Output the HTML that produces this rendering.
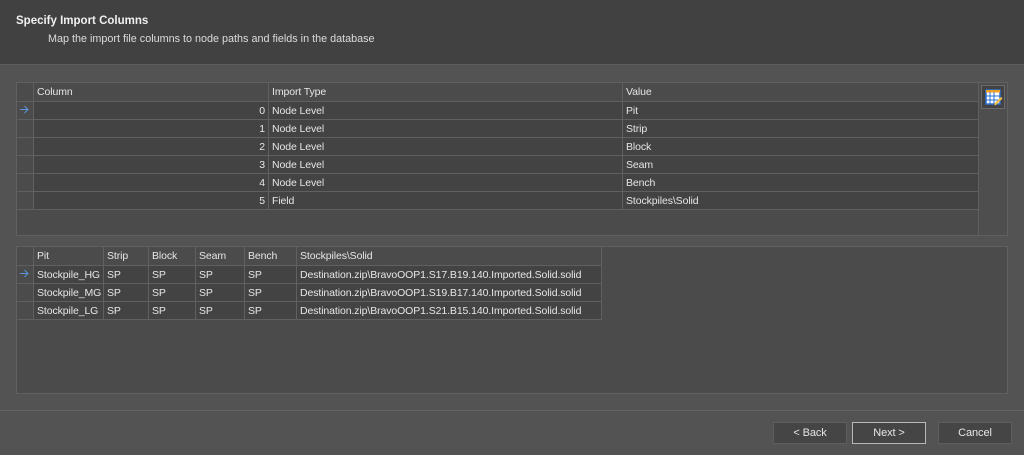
<!DOCTYPE html>
<html><head><style>
*{box-sizing:border-box;margin:0;padding:0}
body{width:1024px;height:455px;background:#535353;font-family:"Liberation Sans",sans-serif;font-size:10.5px;letter-spacing:-0.1px;color:#e6e6e6;position:relative;overflow:hidden}
.hdr{position:absolute;left:0;top:0;width:1024px;height:65px;background:#414141;border-bottom:1px solid #5c5c5c}
.t{position:absolute;left:16px;top:15px;font-weight:bold;font-size:11.5px;color:#f0f0f0;letter-spacing:0}
.s{position:absolute;left:48px;top:33px;font-size:10.8px;color:#dcdcdc;letter-spacing:0}
table{position:absolute;border-collapse:collapse;table-layout:fixed}
td{border:1px solid #606060;height:18px;padding:0 3px;white-space:nowrap;overflow:hidden;background:#434343;line-height:16px}
tr.h td{background:#4b4b4b;height:19px}
td.ind{background:#4b4b4b;padding:0 2px}
.r{text-align:right}
.box{position:absolute;border:1px solid #606060;background:#4b4b4b}
.btn{position:absolute;top:422px;width:74px;height:22px;border:1px solid #5e5e5e;background:#454545;text-align:center;line-height:20px;font-size:11px}
</style></head><body>
<div class="hdr"><div class="t">Specify Import Columns</div><div class="s">Map the import file columns to node paths and fields in the database</div></div>
<div class="box" style="left:16px;top:82px;width:964px;height:154px"></div>
<div class="box" style="left:978px;top:82px;width:30px;height:154px;background:#4e4e4e"></div>
<div style="position:absolute;left:981px;top:85px;width:24px;height:24px;border:1px solid #6a6a6a;background:#434343">
<svg width="22" height="22" viewBox="0 0 22 22"><rect x="4" y="4" width="14" height="14" fill="#fff" stroke="#2a6fd0" stroke-width="1.5"/><rect x="4" y="4" width="14" height="2.5" fill="#f0a020"/><path d="M8 6v12M12 6v12M4 10h14M4 14h14" stroke="#2a6fd0" stroke-width="1"/><path d="M12 18l7-7 1.5 1.5-7 7z" fill="#f5c040"/></svg></div>
<table style="left:16px;top:82px;width:962px">
<colgroup><col style="width:17px"><col style="width:235px"><col style="width:354px"><col style="width:356px"></colgroup>
<tr class="h"><td class="ind"></td><td>Column</td><td>Import Type</td><td>Value</td></tr>
<tr><td class="ind"><svg width="11" height="9"><path d="M1 4.5h8M5.5 1l3.5 3.5L5.5 8" stroke="#5b93dc" fill="none"/></svg></td><td class="r">0</td><td>Node Level</td><td>Pit</td></tr>
<tr><td class="ind"></td><td class="r">1</td><td>Node Level</td><td>Strip</td></tr>
<tr><td class="ind"></td><td class="r">2</td><td>Node Level</td><td>Block</td></tr>
<tr><td class="ind"></td><td class="r">3</td><td>Node Level</td><td>Seam</td></tr>
<tr><td class="ind"></td><td class="r">4</td><td>Node Level</td><td>Bench</td></tr>
<tr><td class="ind"></td><td class="r">5</td><td>Field</td><td>Stockpiles\Solid</td></tr>
</table>
<div class="box" style="left:16px;top:246px;width:992px;height:148px"></div>
<table style="left:16px;top:246px;width:585px">
<colgroup><col style="width:17px"><col style="width:70px"><col style="width:45px"><col style="width:47px"><col style="width:49px"><col style="width:52px"><col style="width:305px"></colgroup>
<tr class="h"><td class="ind"></td><td>Pit</td><td>Strip</td><td>Block</td><td>Seam</td><td>Bench</td><td>Stockpiles\Solid</td></tr>
<tr><td class="ind"><svg width="11" height="9"><path d="M1 4.5h8M5.5 1l3.5 3.5L5.5 8" stroke="#5b93dc" fill="none"/></svg></td><td>Stockpile_HG</td><td>SP</td><td>SP</td><td>SP</td><td>SP</td><td>Destination.zip\BravoOOP1.S17.B19.140.Imported.Solid.solid</td></tr>
<tr><td class="ind"></td><td>Stockpile_MG</td><td>SP</td><td>SP</td><td>SP</td><td>SP</td><td>Destination.zip\BravoOOP1.S19.B17.140.Imported.Solid.solid</td></tr>
<tr><td class="ind"></td><td>Stockpile_LG</td><td>SP</td><td>SP</td><td>SP</td><td>SP</td><td>Destination.zip\BravoOOP1.S21.B15.140.Imported.Solid.solid</td></tr>
</table>
<div style="position:absolute;left:0;top:410px;width:1024px;height:1px;background:#636363"></div>
<div class="btn" style="left:773px">&lt; Back</div>
<div class="btn" style="left:852px;border-color:#b8b8b8">Next &gt;</div>
<div class="btn" style="left:938px">Cancel</div>
</body></html>
